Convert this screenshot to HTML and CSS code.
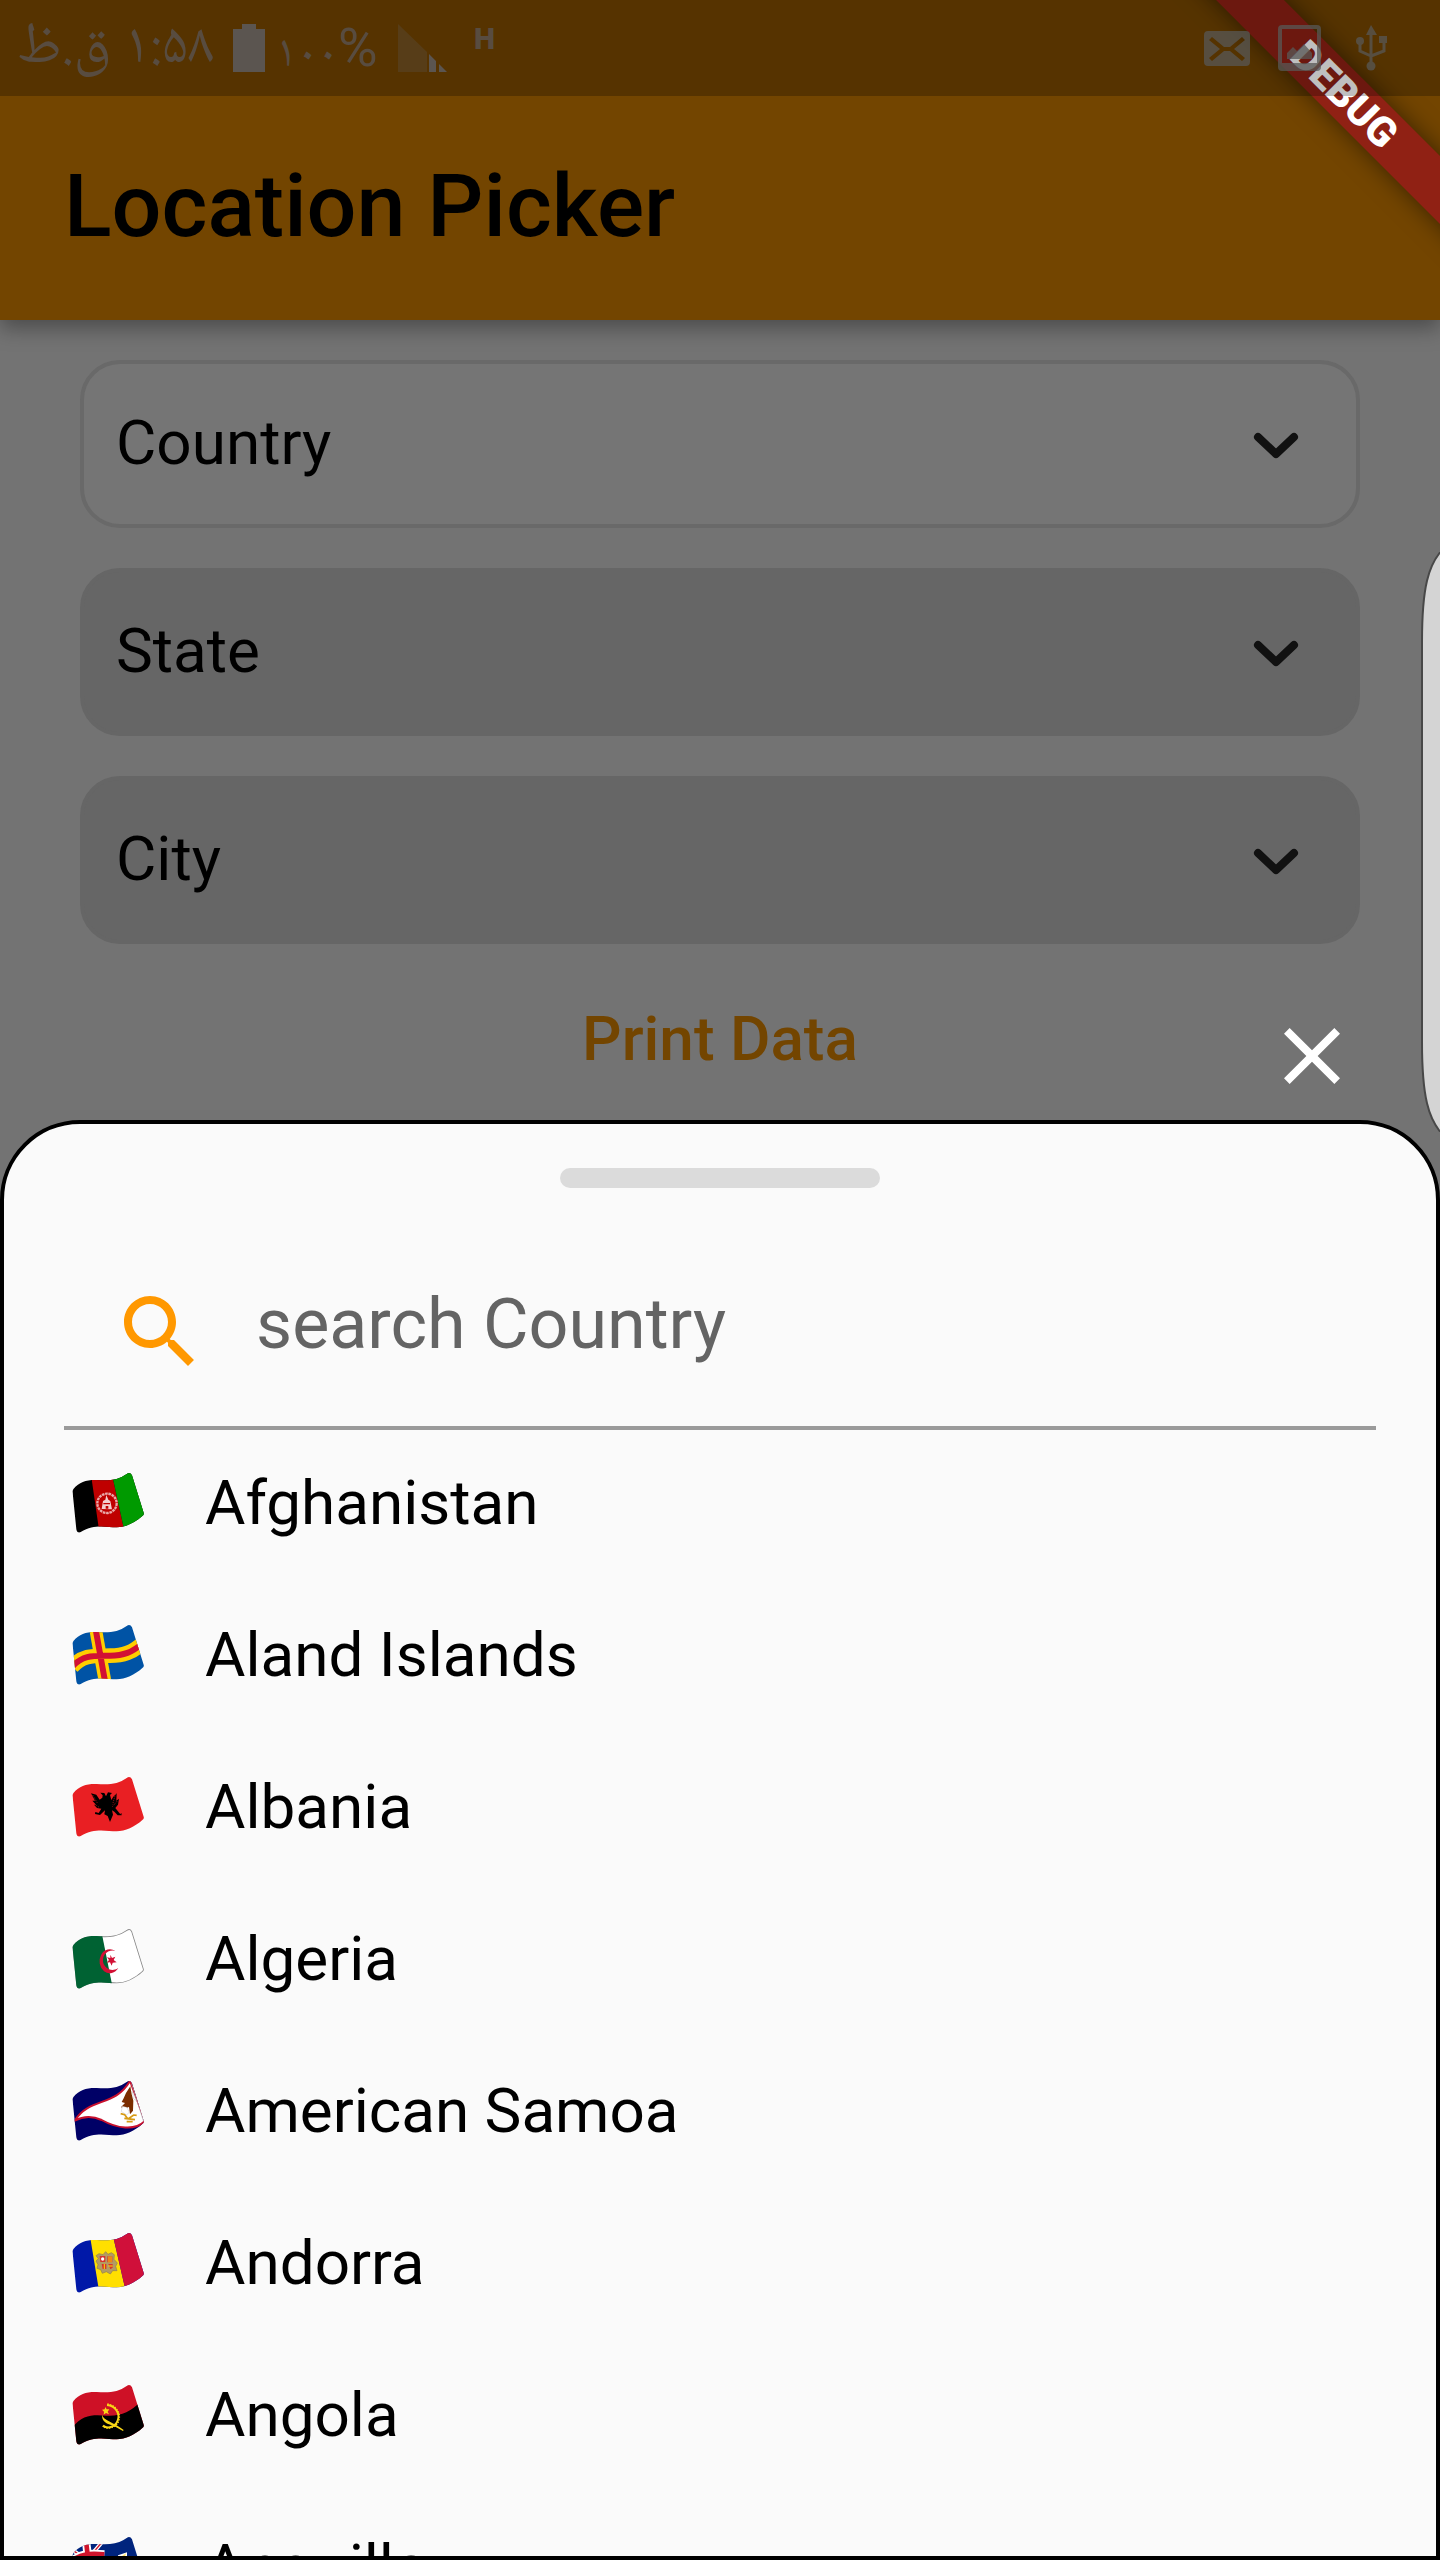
FILE: index.html
```html
<!DOCTYPE html>
<html lang="en">
<head>
<meta charset="utf-8">
<meta name="viewport" content="width=device-width, initial-scale=1">
<title>Location Picker</title>
<link rel="stylesheet" href="styles.css">
</head>
<body>
<svg class="defs" aria-hidden="true">
  <defs>
    <path id="flag-shape" d="M38 98 Q36 92 41 86 C58 66 80 59 110 60 C150 63 175 60 200 42 Q210 35 216 46 L251 158 Q253 164 247 168 C225 188 195 202 170 202 C140 202 105 190 62 216 Q52 222 49 208 Z"/>
    <clipPath id="flag-clip"><use href="#flag-shape"/></clipPath>
  </defs>
</svg>
<div class="screen">
  <div class="status-bar">
    <div class="status-group">
      <span class="status-text" lang="fa" dir="rtl">۱:۵۸ ق.ظ</span>
      <svg class="battery" viewBox="0 0 32 48" aria-hidden="true"><path d="M9 0H23V5H32V48H0V5H9Z"/></svg>
      <span class="status-text charge" lang="fa" dir="ltr">۱۰۰<span class="percent">%</span></span>
      <svg class="signal" viewBox="0 0 50 48" aria-hidden="true"><path opacity=".3" d="M0 0L29 28V48H0Z"/><path d="M31 30L38 37V48H31ZM41 40L49 48H41Z"/></svg>
      <span class="network">H</span>
    </div>
    <div class="status-group status-right">
      <svg class="mail" viewBox="0 0 46 35" aria-hidden="true"><path fill-rule="evenodd" d="M4 0H42Q46 0 46 4V31Q46 35 42 35H4Q0 35 0 31V4Q0 0 4 0ZM5 9L16 18L5 27L8 30L20 20H26L38 30L41 27L30 18L41 9L38 6L26 16H20L8 6Z"/></svg>
      <svg class="photo" viewBox="0 0 43 46" aria-hidden="true"><path fill-rule="evenodd" d="M4 0H39Q43 0 43 4V42Q43 46 39 46H4Q0 46 0 42V4Q0 0 4 0ZM4 4V38H39V4ZM9 34V28L15 22L19 26L26 19L34 28V34Z"/></svg>
      <svg class="usb" viewBox="0 0 31 46" aria-hidden="true"><path d="M15 0L21 10H10Z"/><circle cx="4" cy="16" r="4"/><path d="M23 11H31V18H23Z"/><circle cx="15" cy="41" r="4.500"/><path class="line" d="M15 8V40M4 17V26L15 31M28 17V26L15 31"/></svg>
    </div>
  </div>
  <header class="app-bar"><h1>Location Picker</h1></header>
  <div class="debug-banner">DEBUG</div>

  <form class="picker">
    <div class="field field-active">
      <select aria-label="Country"><option>Country</option></select>
      <svg viewBox="0 0 96 96" aria-hidden="true"><path d="M30 41L48 58L66 41"/></svg>
    </div>
    <div class="field">
      <select aria-label="State"><option>State</option></select>
      <svg viewBox="0 0 96 96" aria-hidden="true"><path d="M30 41L48 58L66 41"/></svg>
    </div>
    <div class="field">
      <select aria-label="City"><option>City</option></select>
      <svg viewBox="0 0 96 96" aria-hidden="true"><path d="M30 41L48 58L66 41"/></svg>
    </div>
    <div class="actions">
      <button class="print" type="button">Print Data</button>
      <button class="close" type="button" aria-label="Close"><svg viewBox="0 0 24 24" aria-hidden="true"><path d="M19 6.410L17.590 5 12 10.590 6.410 5 5 6.410 10.590 12 5 17.590 6.410 19 12 13.410 17.590 19 19 17.590 13.410 12z"/></svg></button>
    </div>
  </form>

  <svg class="edge-panel" viewBox="0 0 20 580" aria-hidden="true"><path d="M24 -4C8 12 2 36 2 90V490C2 544 8 568 24 584"/></svg>

  <section class="sheet">
    <div class="handle"></div>
    <label class="search">
      <svg viewBox="0 0 24 24" aria-hidden="true"><path d="M15.500 14h-.79l-.28-.27C15.410 12.590 16 11.110 16 9.500 16 5.910 13.090 3 9.500 3S3 5.910 3 9.500 5.910 16 9.500 16c1.610 0 3.090-.59 4.230-1.570l.27.28v.79l5 4.990L20.490 19l-4.990-5zm-6 0C7.010 14 5 11.990 5 9.500S7.010 5 9.500 5 14 7.010 14 9.500 11.990 14 9.500 14z"/></svg>
      <input type="text" placeholder="search Country" aria-label="search Country">
    </label>
    <ul class="countries">
      <li>
        <svg class="flag" viewBox="36 36 216 183" aria-hidden="true"><g clip-path="url(#flag-clip)">
          <path d="M30 30H260V230H30Z"/><path fill="#bf0000" d="M91 30H153L197 230H120Z"/><path fill="#009a00" d="M153 30H260V230H197Z"/>
          <circle cx="141" cy="130" r="29" fill="none" stroke="#e9a9a9" stroke-width="7" stroke-dasharray="8 2"/>
          <path fill="#f3cfcf" d="M125 147L129 123L136 119L139 105L145 119L151 123L156 148Z"/><path fill="#bf0000" d="M130 129H150V133H130ZM137 138H145V146H137Z"/>
        </g></svg><span>Afghanistan</span>
      </li>
      <li>
        <svg class="flag" viewBox="36 36 216 183" aria-hidden="true"><g clip-path="url(#flag-clip)" fill="none">
          <path fill="#0053a5" d="M30 30H260V230H30Z"/>
          <path stroke="#ffce00" stroke-width="38" d="M103 30L139 230"/><path stroke="#ffce00" stroke-width="44" d="M36 165C70 126 106 132 150 131C190 131 216 122 250 92"/>
          <path stroke="#d21034" stroke-width="18" d="M103 30L139 230M36 165C70 126 106 132 150 131C190 131 216 122 250 92"/>
        </g></svg><span>Aland Islands</span>
      </li>
      <li>
        <svg class="flag" viewBox="36 36 216 183" aria-hidden="true"><g clip-path="url(#flag-clip)">
          <path fill="#e91f23" d="M30 30H260V230H30Z"/>
          <path d="M121 86L133 87L138 97L144 85L156 87L150 93L154 108L160 98L170 88L169 110L177 104L174 122L166 132L181 151L184 146L185 154L173 154L163 143L156 139L159 152L150 174L143 156L133 151L135 139L120 153L105 150L106 144L116 147L124 134L111 132L102 122L108 122L97 110L105 110L93 88L109 92L119 107L127 101L128 94Z"/>
          <path d="M98 93L112 117M104 121L119 131M166 91L158 121M171 112L157 128" fill="none" stroke="#e91f23" stroke-width="2" stroke-dasharray="3 3"/>
        </g></svg><span>Albania</span>
      </li>
      <li>
        <svg class="flag" viewBox="36 36 216 183" aria-hidden="true"><g clip-path="url(#flag-clip)">
          <path fill="#fff" d="M30 30H260V230H30Z"/><use href="#flag-shape" fill="none" stroke="#888" stroke-width="5"/><path fill="#006233" d="M30 30H121L161 230H30Z"/>
          <path fill="#d21034" d="M166 105A31 36 0 1 0 175 156A29 29 0 1 1 166 105ZM151 116L156 126L166 122L161 132L170 139L158 140L155 149L150 139L140 140L147 132L141 124L151 126Z"/>
        </g></svg><span>Algeria</span>
      </li>
      <li>
        <svg class="flag" viewBox="36 36 216 183" aria-hidden="true"><g clip-path="url(#flag-clip)">
          <path fill="#000066" d="M30 30H260V230H30Z"/>
          <path fill="#fff" stroke="#c9102d" stroke-width="6" d="M44 158C90 86 163 119 210 39L255 159C225 190 170 181 125 156C96 143 72 143 44 158Z"/>
          <path fill="none" stroke="#aaa" stroke-width="2" d="M215 47L250 158"/>
          <path fill="#7b2d00" d="M211 55L215 79L220 98L219 128L210 139L207 117L187 124L184 116L195 105L185 102L191 91L198 75Z"/>
          <path fill="#fff" stroke="#aaa" stroke-width="1" d="M187 115L200 118L208 132L200 141L184 130ZM217 70L229 98L220 92Z"/>
          <path fill="none" stroke="#d79b14" stroke-width="5" d="M182 137L194 140L204 153L221 141L230 142M193 151L225 155M200 161H218"/>
        </g></svg><span>American Samoa</span>
      </li>
      <li>
        <svg class="flag" viewBox="36 36 216 183" aria-hidden="true"><g clip-path="url(#flag-clip)">
          <path fill="#0018a8" d="M30 30H260V230H30Z"/><path fill="#ffdf00" d="M87 30H155L201 230H120Z"/><path fill="#d0103a" d="M155 30H260V230H201Z"/>
          <path fill="#b39b63" stroke="#93804c" stroke-width="2" d="M117 101L129 104L137 95L144 103L154 98L163 104L162 118L172 129L167 139L171 152L158 152L151 162L139 155L127 160L122 149L111 145L114 134L108 123L115 116L108 107Z"/>
          <path fill="#d5342c" d="M119 108H136V126H121ZM142 109H157V127H142ZM125 132H139V147H128ZM145 132H158V143L151 148Z"/><path stroke="#ffdf00" stroke-width="3" d="M147 109V127M153 109V127M133 132V147M145 138H158"/><circle cx="128" cy="117" r="5" fill="#fff"/>
        </g></svg><span>Andorra</span>
      </li>
      <li>
        <svg class="flag" viewBox="36 36 216 183" aria-hidden="true"><g clip-path="url(#flag-clip)">
          <path fill="#ce1126" d="M30 30H260V230H30Z"/><path d="M36 169C68 124 105 129 140 131C184 133 212 119 240 90L270 230H36Z"/>
          <path fill="none" stroke="#f9d616" stroke-width="6" d="M141 99C167 101 181 126 173 146C166 164 144 172 129 161"/><path fill="none" stroke="#f9d616" stroke-width="4" stroke-dasharray="4 4" d="M142 96C171 100 184 127 176 148C168 167 143 175 127 163"/>
          <path fill="#f9d616" d="M136 105L140 112L148 112L143 119L147 127L138 123L131 128L132 119L126 113L134 112ZM126 128C130 145 160 150 191 174L189 177L163 163L147 157C135 153 125 143 126 128Z"/>
        </g></svg><span>Angola</span>
      </li>
      <li>
        <svg class="flag" viewBox="36 36 216 183" aria-hidden="true"><g clip-path="url(#flag-clip)">
          <path fill="#00247d" d="M30 30H260V230H30Z"/>
          <g fill="none"><path stroke="#fff" stroke-width="12" d="M40 80L135 145M45 150L124 57"/><path stroke="#cf142b" stroke-width="4" d="M40 80L135 145M45 150L124 57"/><path stroke="#fff" stroke-width="25" d="M78 50L90 155M35 112C60 88 90 88 133 91"/><path stroke="#cf142b" stroke-width="14" d="M78 50L90 155M35 112C60 88 90 88 133 91"/></g>
          <path fill="#fff" d="M174 94L201 85V120Q202 142 190 148Q175 135 174 94Z"/><path fill="#ffe35d" d="M183 98L198 88L193 105Z"/>
        </g></svg><span>Anguilla</span>
      </li>
    </ul>
  </section>
</div>
</body>
</html>
```
FILE: styles.css
```css
* { box-sizing: border-box; }

body {
  margin: 0;
  background: #737373;
  color: #000;
  font-family: Roboto, "Liberation Sans", sans-serif;
}

button, select, input { font: inherit; color: inherit; margin: 0; }
svg { display: block; flex: none; }
.defs { position: absolute; width: 0; height: 0; }

.screen {
  position: relative;
  display: flex;
  flex-direction: column;
  height: 100vh;
  overflow: hidden;
}

/* Status bar: a translucent strip over the app bar colour */
.status-bar {
  display: flex;
  justify-content: space-between;
  flex: none;
  height: 96px;
  padding: 0 53px 0 20px;
  position: relative;
  z-index: 3;
  background: rgba(0, 0, 0, .25);
  color: #584c40;
  fill: #5b5550;
}

.status-group { display: flex; align-items: center; }
.status-text {
  width: 194px;
  padding-top: 4px;
  font-family: "Noto Naskh Arabic", "Noto Sans Arabic", "DejaVu Sans", sans-serif;
  font-size: 58px;
  line-height: 92px;
  white-space: nowrap;
}
.battery { width: 32px; height: 48px; margin-left: 19px; }
.charge { width: 100px; margin: 0 22px 0 11px; padding-top: 8px; font-size: 46px; }
.percent { font-family: Roboto, sans-serif; font-size: 54px; }
.signal { width: 50px; height: 48px; }
.network { margin: 0 0 20px 26px; font-size: 30px; font-weight: 900; }
.status-right { gap: 28px; fill: #585856; opacity: .75; }
.mail { width: 46px; height: 35px; }
.photo { width: 43px; height: 46px; }
.usb { width: 31px; height: 46px; margin-left: 7px; }
.usb .line { fill: none; stroke: #585856; stroke-width: 3px; }

.app-bar {
  display: flex;
  align-items: center;
  flex: none;
  height: 320px;
  margin-top: -96px;
  padding: 96px 64px 4px;
  background: #734500;
  box-shadow: 0 8px 20px rgba(0, 0, 0, .35);
}
.app-bar h1 { margin: 0; font-size: 88px; font-weight: 500; line-height: 104px; }

.debug-banner {
  position: absolute;
  z-index: 2;
  top: 72px;
  right: -156px;
  width: 500px;
  height: 48px;
  padding-right: 4px;
  transform: rotate(45deg);
  background: #902114;
  box-shadow: 0 0 24px rgba(0, 0, 0, .5);
  color: #fff;
  font-size: 41px;
  font-weight: 900;
  line-height: 48px;
  text-align: center;
}

.picker {
  display: flex;
  flex-direction: column;
  flex: none;
  gap: 40px;
  padding: 40px 80px 16px;
}

.field { display: grid; align-items: center; }
.field > * { grid-area: 1 / 1; }
.field select {
  width: 100%;
  height: 168px;
  padding: 0 140px 4px 32px;
  appearance: none;
  border: 4px solid #666;
  border-radius: 40px;
  background: #666;
  font-size: 62px;
}
.field-active select { border-color: #696969; background: #757575; }
.field svg {
  justify-self: end;
  width: 96px;
  height: 96px;
  margin-right: 36px;
  fill: none;
  stroke: #111;
  stroke-width: 8px;
  stroke-linecap: round;
  stroke-linejoin: round;
  pointer-events: none;
}

.actions {
  display: grid;
  grid-template-columns: 1fr auto 1fr;
  align-items: start;
  height: 120px;
}
.actions button { padding: 0; border: 0; background: none; }
.actions .print {
  grid-column: 2;
  height: 108px;
  color: #734500;
  font-size: 62px;
  font-weight: 500;
}
.actions .close {
  justify-self: end;
  width: 96px;
  height: 96px;
  margin-top: 24px;
  fill: #fff;
}

.edge-panel {
  position: absolute;
  z-index: 2;
  top: 552px;
  right: 0;
  width: 20px;
  height: 580px;
  fill: #d4d4d4;
  stroke: #484848;
  stroke-width: 2px;
}

.sheet {
  display: flex;
  flex-direction: column;
  flex: 1;
  min-height: 0;
  padding: 44px 60px 0;
  border: 4px solid #000;
  border-radius: 80px 80px 0 0;
  background: #fafafa;
}
.handle {
  flex: none;
  align-self: center;
  width: 320px;
  height: 20px;
  border-radius: 10px;
  background: #dbdbdb;
}
.search {
  display: flex;
  align-items: flex-end;
  flex: none;
  gap: 48px;
  padding: 80px 48px 46px;
  border-bottom: 4px solid #9a9a9a;
}
.search svg { width: 96px; height: 96px; fill: #ff9800; }
.search input {
  flex: 1;
  min-width: 0;
  height: 112px;
  padding: 0;
  border: 0;
  outline: 0;
  background: none;
  font-size: 70px;
}
.search input::placeholder { color: #646464; opacity: 1; }

.countries {
  flex: 1;
  min-height: 0;
  margin: 0;
  padding: 0;
  overflow-y: auto;
  scrollbar-width: none;
  list-style: none;
}
.countries li {
  display: flex;
  align-items: center;
  gap: 61px;
  height: 152px;
  padding: 0 8px 8px;
  font-size: 62px;
}
.flag { width: 72px; height: 61px; }
```
